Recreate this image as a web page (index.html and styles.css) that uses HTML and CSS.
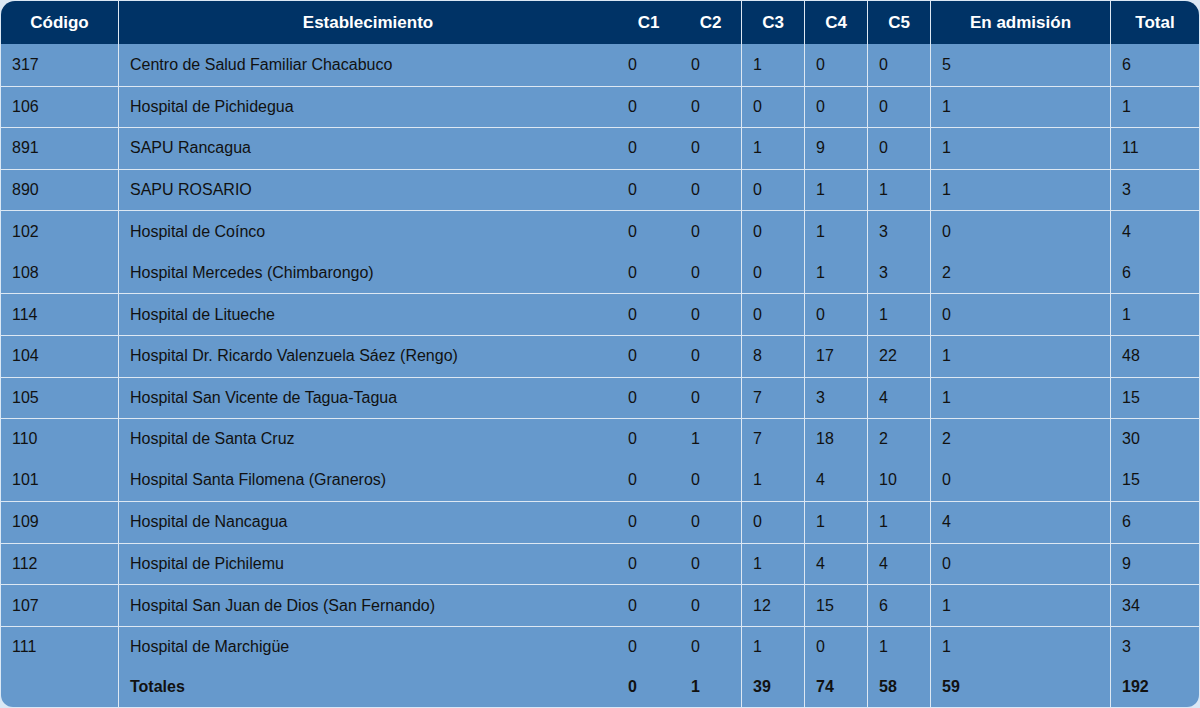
FILE: index.html
```html
<!DOCTYPE html>
<html lang="es">
<head>
<meta charset="utf-8">
<title>Establecimientos</title>
<link rel="stylesheet" href="styles.css">
</head>
<body>
<table class="grid">
  <thead>
    <tr>
      <th class="c-cod first">Código</th>
      <th class="c-est sep">Establecimiento</th>
      <th class="c-n1">C1</th>
      <th class="c-n2">C2</th>
      <th class="c-n sep">C3</th>
      <th class="c-n sep">C4</th>
      <th class="c-n sep">C5</th>
      <th class="c-adm sep">En admisión</th>
      <th class="c-tot sep last">Total</th>
    </tr>
  </thead>
  <tbody>
    <tr class="nol"><td>317</td><td class="sep">Centro de Salud Familiar Chacabuco</td><td>0</td><td>0</td><td class="sep">1</td><td class="sep">0</td><td class="sep">0</td><td class="sep">5</td><td class="sep">6</td></tr>
    <tr><td>106</td><td class="sep">Hospital de Pichidegua</td><td>0</td><td>0</td><td class="sep">0</td><td class="sep">0</td><td class="sep">0</td><td class="sep">1</td><td class="sep">1</td></tr>
    <tr><td>891</td><td class="sep">SAPU Rancagua</td><td>0</td><td>0</td><td class="sep">1</td><td class="sep">9</td><td class="sep">0</td><td class="sep">1</td><td class="sep">11</td></tr>
    <tr><td>890</td><td class="sep">SAPU ROSARIO</td><td>0</td><td>0</td><td class="sep">0</td><td class="sep">1</td><td class="sep">1</td><td class="sep">1</td><td class="sep">3</td></tr>
    <tr><td>102</td><td class="sep">Hospital de Coínco</td><td>0</td><td>0</td><td class="sep">0</td><td class="sep">1</td><td class="sep">3</td><td class="sep">0</td><td class="sep">4</td></tr>
    <tr class="nol"><td>108</td><td class="sep">Hospital Mercedes (Chimbarongo)</td><td>0</td><td>0</td><td class="sep">0</td><td class="sep">1</td><td class="sep">3</td><td class="sep">2</td><td class="sep">6</td></tr>
    <tr><td>114</td><td class="sep">Hospital de Litueche</td><td>0</td><td>0</td><td class="sep">0</td><td class="sep">0</td><td class="sep">1</td><td class="sep">0</td><td class="sep">1</td></tr>
    <tr><td>104</td><td class="sep">Hospital Dr. Ricardo Valenzuela Sáez (Rengo)</td><td>0</td><td>0</td><td class="sep">8</td><td class="sep">17</td><td class="sep">22</td><td class="sep">1</td><td class="sep">48</td></tr>
    <tr><td>105</td><td class="sep">Hospital San Vicente de Tagua-Tagua</td><td>0</td><td>0</td><td class="sep">7</td><td class="sep">3</td><td class="sep">4</td><td class="sep">1</td><td class="sep">15</td></tr>
    <tr><td>110</td><td class="sep">Hospital de Santa Cruz</td><td>0</td><td>1</td><td class="sep">7</td><td class="sep">18</td><td class="sep">2</td><td class="sep">2</td><td class="sep">30</td></tr>
    <tr class="nol"><td>101</td><td class="sep">Hospital Santa Filomena (Graneros)</td><td>0</td><td>0</td><td class="sep">1</td><td class="sep">4</td><td class="sep">10</td><td class="sep">0</td><td class="sep">15</td></tr>
    <tr><td>109</td><td class="sep">Hospital de Nancagua</td><td>0</td><td>0</td><td class="sep">0</td><td class="sep">1</td><td class="sep">1</td><td class="sep">4</td><td class="sep">6</td></tr>
    <tr><td>112</td><td class="sep">Hospital de Pichilemu</td><td>0</td><td>0</td><td class="sep">1</td><td class="sep">4</td><td class="sep">4</td><td class="sep">0</td><td class="sep">9</td></tr>
    <tr><td>107</td><td class="sep">Hospital San Juan de Dios (San Fernando)</td><td>0</td><td>0</td><td class="sep">12</td><td class="sep">15</td><td class="sep">6</td><td class="sep">1</td><td class="sep">34</td></tr>
    <tr><td>111</td><td class="sep">Hospital de Marchigüe</td><td>0</td><td>0</td><td class="sep">1</td><td class="sep">0</td><td class="sep">1</td><td class="sep">1</td><td class="sep">3</td></tr>
    <tr class="nol totals"><td class="bl"></td><td class="sep">Totales</td><td>0</td><td>1</td><td class="sep">39</td><td class="sep">74</td><td class="sep">58</td><td class="sep">59</td><td class="sep br">192</td></tr>
  </tbody>
</table>
</body>
</html>
```

FILE: styles.css
```css
* { box-sizing: border-box; }

html, body {
  margin: 0;
  padding: 0;
  background: #dbe8f5;
}

body {
  padding: 1px;
  font-family: "Liberation Sans", Arial, sans-serif;
}

.grid {
  width: 1198px;
  table-layout: fixed;
  border-collapse: separate;
  border-spacing: 0;
}

.grid th {
  height: 43px;
  background: #003366;
  color: #ffffff;
  font-size: 17px;
  font-weight: bold;
  text-align: center;
  vertical-align: middle;
  padding: 0;
}

.grid th.first { border-top-left-radius: 14px; }
.grid th.last { border-top-right-radius: 14px; }

.c-cod { width: 117px; }
.c-est { width: 499px; }
.c-n1 { width: 63px; }
.c-n2 { width: 61px; }
.c-n { width: 63px; }
.c-adm { width: 180px; }
.c-tot { width: 89px; }

.grid .sep { border-left: 1px solid #dde8f3; }

.grid tbody tr { height: 41.57px; }
.grid tbody tr.totals { height: 39.5px; }

.grid td {
  background: #6699cc;
  color: #111111;
  font-size: 16px;
  padding: 0 10px 0 11px;
  vertical-align: middle;
  text-align: left;
  border-top: 1px solid #dde8f3;
  white-space: nowrap;
}

.grid tr.nol td { border-top: none; }

.grid tr.totals td { font-weight: bold; }

.grid td.bl { border-bottom-left-radius: 12px; }
.grid td.br { border-bottom-right-radius: 12px; }
```
